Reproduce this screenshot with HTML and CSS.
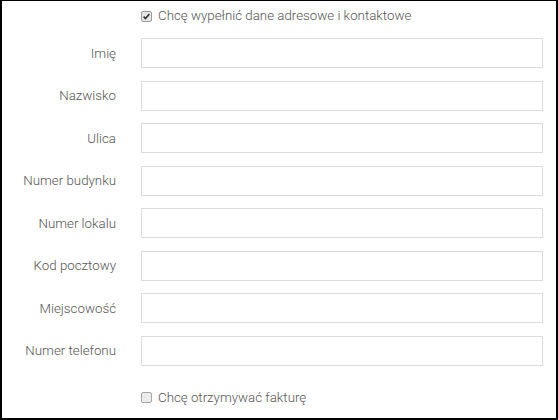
FILE: index.html
```html
<!DOCTYPE html>
<html lang="pl">
<head>
<meta charset="utf-8">
<link rel="stylesheet" href="styles.css">
</head>
<body>
<div class="frame">
  <label class="check-row">
    <span class="box checked">
      <svg width="11" height="11" viewBox="0 0 11 11"><rect x="0.5" y="0.5" width="10" height="10" rx="1.5" fill="#e6e6e6" stroke="#9a9a9a"/><path d="M2.6 5.6 L4.5 7.6 L8.4 3.1" fill="none" stroke="#333" stroke-width="1.6"/></svg>
    </span>
    <span class="check-text">Chcę wypełnić dane adresowe i kontaktowe</span>
  </label>
  <div class="form">
    <span class="lbl">Imię</span><span class="inp"></span>
    <span class="lbl">Nazwisko</span><span class="inp"></span>
    <span class="lbl">Ulica</span><span class="inp"></span>
    <span class="lbl">Numer budynku</span><span class="inp"></span>
    <span class="lbl">Numer lokalu</span><span class="inp"></span>
    <span class="lbl">Kod pocztowy</span><span class="inp"></span>
    <span class="lbl">Miejscowość</span><span class="inp"></span>
    <span class="lbl">Numer telefonu</span><span class="inp"></span>
  </div>
  <label class="check-row bottom">
    <span class="box">
      <svg width="11" height="11" viewBox="0 0 11 11"><rect x="0.5" y="0.5" width="10" height="10" rx="1.5" fill="#ececec" stroke="#a5a5a5"/></svg>
    </span>
    <span class="check-text">Chcę otrzymywać fakturę</span>
  </label>
</div>
</body>
</html>
```
FILE: styles.css
```css
html, body {
  margin: 0;
  padding: 0;
  background: #fff;
}
.frame {
  box-sizing: border-box;
  width: 558px;
  height: 420px;
  border-style: solid;
  border-color: #000;
  border-width: 1px 2px 2px 2px;
  padding-top: 7px;
  font-family: Roboto, "Liberation Sans", sans-serif;
  font-size: 13.3px;
  font-weight: 300;
  color: #555;
}
.check-row {
  display: flex;
  align-items: center;
  height: 16px;
  padding-left: 139px;
  gap: 6px;
}
.box {
  display: flex;
  width: 11px;
  height: 11px;
}
.check-text {
  line-height: 16px;
}
.form {
  display: grid;
  grid-template-columns: 114px 402px;
  column-gap: 25px;
  row-gap: 12.5px;
  grid-auto-rows: 30px;
  margin-top: 14px;
}
.lbl {
  display: flex;
  align-items: center;
  justify-content: flex-end;
}
.inp {
  box-sizing: border-box;
  border: 1px solid #dcdcdc;
  background: #fff;
}
.check-row.bottom {
  margin-top: 24px;
}
```
